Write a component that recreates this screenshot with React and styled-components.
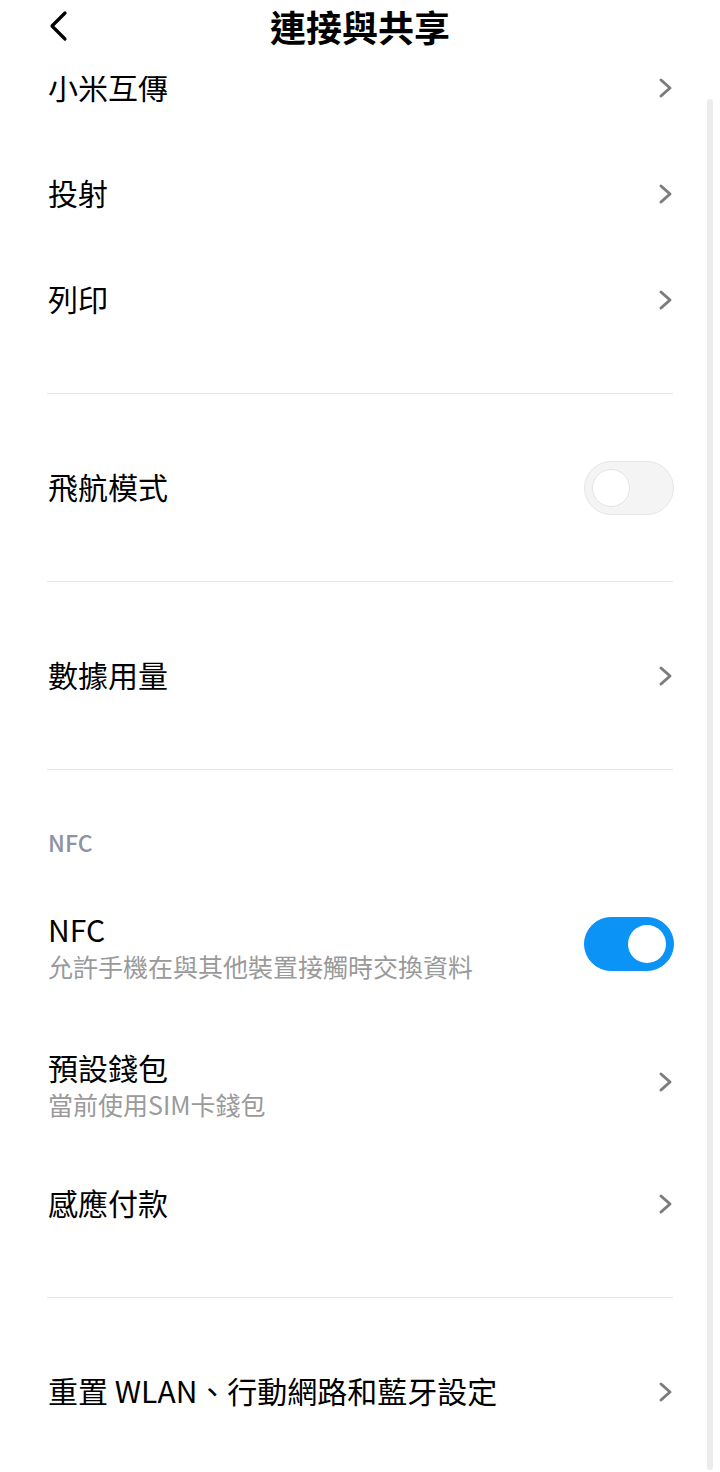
import React from "react";
import styled, { createGlobalStyle } from "styled-components";

const GlobalStyle = createGlobalStyle`
  html, body {
    margin: 0;
    padding: 0;
    background: #fff;
  }
  body {
    font-family: "Noto Sans CJK TC", "Noto Sans", sans-serif;
    color: #000;
  }
`;

const Chevron = () => (
  <svg width="16" height="22" viewBox="0 0 16 22">
    <path
      d="M3 3 L12 11 L3 19"
      fill="none"
      stroke="#7c7c7c"
      strokeWidth="3"
      strokeLinecap="round"
      strokeLinejoin="round"
    />
  </svg>
);

const BackIcon = () => (
  <svg width="22" height="32" viewBox="0 0 22 32">
    <path
      d="M17 3 L4 16 L17 29"
      fill="none"
      stroke="#000"
      strokeWidth="3.2"
      strokeLinecap="round"
      strokeLinejoin="round"
    />
  </svg>
);

const App = () => {
  return (
    <>
      <GlobalStyle />
      <Page>
        <Header>
          <Back>
            <BackIcon />
          </Back>
          <Title>連接與共享</Title>
          <span />
        </Header>
        <Viewport>
          <Content>
            <Row>
              <RowLabel>小米互傳</RowLabel>
              <Chevron />
            </Row>
            <Row>
              <RowLabel>投射</RowLabel>
              <Chevron />
            </Row>
            <Row>
              <RowLabel>列印</RowLabel>
              <Chevron />
            </Row>
            <Divider />
            <Row>
              <RowLabel>飛航模式</RowLabel>
              <Toggle $on={false}>
                <Knob $on={false} />
              </Toggle>
            </Row>
            <Divider />
            <Row>
              <RowLabel>數據用量</RowLabel>
              <Chevron />
            </Row>
            <Divider />
            <SectionTitle>NFC</SectionTitle>
            <Row $tall>
              <TextBlock>
                <Label>NFC</Label>
                <Sub>允許手機在與其他裝置接觸時交換資料</Sub>
              </TextBlock>
              <Toggle $on>
                <Knob $on />
              </Toggle>
            </Row>
            <Row $tall>
              <TextBlock>
                <Label>預設錢包</Label>
                <Sub>當前使用SIM卡錢包</Sub>
              </TextBlock>
              <Chevron />
            </Row>
            <Row>
              <RowLabel>感應付款</RowLabel>
              <Chevron />
            </Row>
            <Divider />
            <Row>
              <RowLabel>重置 WLAN、行動網路和藍牙設定</RowLabel>
              <Chevron />
            </Row>
          </Content>
        </Viewport>
        <ScrollBar />
      </Page>
    </>
  );
};

const Page = styled.div`
  position: relative;
  width: 720px;
  height: 1472px;
  overflow: hidden;
  display: flex;
  flex-direction: column;
  background: #fff;
`;

const Header = styled.header`
  height: 76px;
  flex: none;
  display: grid;
  grid-template-columns: 1fr auto 1fr;
  align-items: start;
  background: #fff;
`;

const Back = styled.div`
  height: 52px;
  display: flex;
  align-items: center;
  padding-left: 48px;
`;

const Title = styled.h1`
  margin: 0;
  font-size: 36px;
  line-height: 52px;
  font-weight: 700;
  color: #000;
  letter-spacing: 0;
`;

const Viewport = styled.div`
  flex: 1;
  overflow: hidden;
`;

const Content = styled.div`
  margin-top: -41px;
`;

const Row = styled.div`
  height: ${(p) => (p.$tall ? 138 : 106)}px;
  display: flex;
  align-items: center;
  justify-content: space-between;
  padding: 0 46px 0 48px;
`;

const Label = styled.div`
  font-size: 30px;
  line-height: 38px;
  font-weight: 400;
  color: #000;
`;

const RowLabel = styled(Label)`
  margin-bottom: 4px;
`;

const TextBlock = styled.div`
  display: flex;
  flex-direction: column;
  padding-top: 6px;
`;

const Sub = styled.div`
  font-size: 25px;
  line-height: 36px;
  color: #9a9a9a;
`;

const Divider = styled.div`
  height: 1px;
  background: #e8e8e8;
  margin: 40px 47px 41px;
`;

const SectionTitle = styled.div`
  padding: 17px 48px 19px;
  font-size: 23px;
  line-height: 28px;
  font-weight: 500;
  color: #8d92a6;
`;

const Toggle = styled.div`
  width: 90px;
  height: 54px;
  box-sizing: border-box;
  border-radius: 27px;
  display: flex;
  align-items: center;
  justify-content: ${(p) => (p.$on ? "flex-end" : "flex-start")};
  padding: 0 7px;
  background: ${(p) => (p.$on ? "#0c93f6" : "#f4f4f4")};
  border: 1px solid ${(p) => (p.$on ? "#0c93f6" : "#e6e6e6")};
`;

const Knob = styled.div`
  width: 38px;
  height: 38px;
  box-sizing: border-box;
  border-radius: 50%;
  background: #fff;
  border: ${(p) => (p.$on ? "none" : "1px solid #e4e4e4")};
`;

const ScrollBar = styled.div`
  position: absolute;
  top: 99px;
  right: 7px;
  width: 6px;
  height: 1371px;
  border-radius: 3px;
  background: #ececec;
`;

export default App;
